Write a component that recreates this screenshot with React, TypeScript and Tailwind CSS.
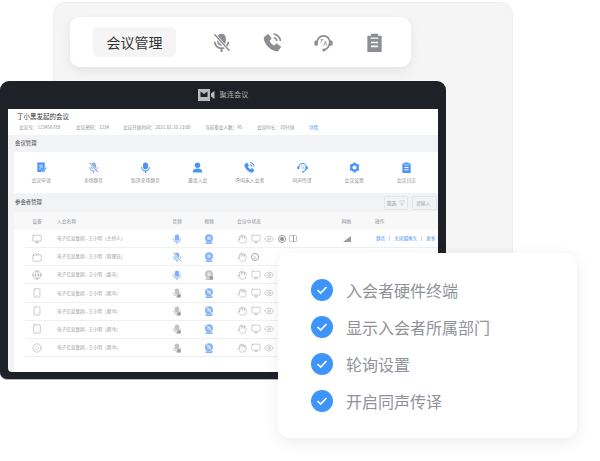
import React from "react";
import { Hand, Monitor, Eye, Tv, Smartphone, Tablet, Filter, Smile, Globe } from "lucide-react";

const FONT = { fontFamily: '"Noto Sans CJK SC", "Noto Sans", sans-serif' };

type IP = { c: string; s: number; off?: boolean; sub?: boolean; strike?: string };

function MicIcon({ c, s, off, sub, strike }: IP) {
  return (
    <svg width={s} height={s} viewBox="0 0 24 24" fill="none">
      <rect x="6.500" y="1" width="11" height="15" rx="5.500" fill={c} />
      <path d="M3.500 11a8.500 8.500 0 0 0 17 0" stroke={c} strokeWidth="2.200" />
      <path d="M12 19v5" stroke={c} strokeWidth="2.400" />
      {off && <path d="M3 2l18 20" stroke="#fff" strokeWidth="4" />}
      {off && <path d="M3 1.500l19 21" stroke={strike ?? c} strokeWidth="1.800" />}
      {sub && <circle cx="17" cy="19" r="4.500" fill="#989a9f" />}
    </svg>
  );
}

function CamIcon({ c, s, off, sub }: IP) {
  return (
    <svg width={s} height={s} viewBox="0 0 24 24" fill="none">
      <circle cx="12" cy="10" r="9.500" fill={c} />
      <circle cx="12" cy="10" r="4.500" fill="#fff" opacity="0.55" />
      <path d="M4 24h16v-4H4z" fill={c} />
      {off && <path d="M3 2l19 20" stroke="#fff" strokeWidth="3" />}
      {off && <path d="M3 3l18 19" stroke="#6a7fa3" strokeWidth="1.400" />}
      {sub && <circle cx="18" cy="19" r="4.500" fill="#989a9f" />}
    </svg>
  );
}

function PhoneIcon({ c, s }: IP) {
  return (
    <svg width={s} height={s} viewBox="0 0 24 24" fill="none">
      <path d="M1.500 5 6.500 1l4.500 6-2.600 2.800c1 2.700 3.200 5 5.900 6l2.700-2.700 6 4.400-3.500 4.800c-.6.800-1.500 1.100-2.500.9C9 21.500 2.500 15 1 7.500c-.2-1 0-1.900.5-2.500z" fill={c} />
      <path d="M13.500 1.500a9 9 0 0 1 8.500 8.500M13.500 6a4.500 4.500 0 0 1 4 4" stroke={c} strokeWidth="2.200" />
    </svg>
  );
}

function HeadsetIcon({ c, s }: IP) {
  return (
    <svg width={s} height={s} viewBox="0 0 24 24" fill="none">
      <path d="M4 11.500a8 8 0 0 1 16 0c0 5-3.500 9-7 9.500" stroke={c} strokeWidth="2.200" />
      <rect x="0.500" y="9.500" width="4.500" height="6.500" rx="1.800" fill={c} />
      <rect x="19" y="9.500" width="4.500" height="6.500" rx="1.800" fill={c} />
      <circle cx="12.500" cy="21.500" r="2" fill={c} />
      <path d="M8 8.500h4M10 8.500c0 1.800-.8 3-2 3.600M12.500 16l1.800-5.500 1.800 5.500" stroke={c} strokeWidth="1" />
    </svg>
  );
}

function ClipIcon({ c, s }: IP) {
  return (
    <svg width={s} height={s} viewBox="0 0 24 24" fill="none">
      <path d="M3 3.500h4.500V1h9v2.500H21V24H3z" fill={c} />
      <path d="M7 6.500h10" stroke="#fff" strokeWidth="1.500" />
      <path d="M7.500 12h9M7.500 17h9" stroke="#fff" strokeWidth="2.200" />
    </svg>
  );
}

function DocIcon({ c, s }: IP) {
  return (
    <svg width={s} height={s} viewBox="0 0 24 24" fill="none">
      <path d="M3 1h16v21H3z" fill={c} />
      <path d="M7 7h8M7 11h8M7 15h4" stroke="#fff" strokeWidth="1.700" />
      <path d="m13 19 8-8 2.500 2-8 8.500-3 .5z" fill={c} stroke="#fff" strokeWidth="1" />
    </svg>
  );
}

function UserIcon({ c, s }: IP) {
  return (
    <svg width={s} height={s} viewBox="0 0 24 24" fill={c}>
      <circle cx="12" cy="7" r="6" />
      <path d="M2 23v-3c0-4 4-6 10-6s10 2 10 6v3z" />
    </svg>
  );
}

function GearIcon({ c, s }: IP) {
  return (
    <svg width={s} height={s} viewBox="0 0 24 24" fill="none">
      <circle cx="12" cy="12" r="7" stroke={c} strokeWidth="5" />
      <path d="M12 1v5M12 18v5M2.500 6.500l4.300 2.500M17.200 15l4.300 2.500M2.500 17.500 6.800 15M17.200 9l4.300-2.500" stroke={c} strokeWidth="4.500" />
    </svg>
  );
}

function LogoMark() {
  return (
    <svg width="17" height="12" viewBox="0 0 17 12" fill="none">
      <path d="M0 0h12v12H0z" fill="#bcbcbc" />
      <path d="M2.500 2.500 6 5l3.500-2.500V8h-7z" fill="#1e2128" />
      <path d="M13 4.500 16.500 2v8L13 7.500z" fill="#bcbcbc" />
    </svg>
  );
}

function Check({ text }: { text: string }) {
  return (
    <div className="flex h-[37px] items-center gap-[13px]">
      <div className="flex h-[22px] w-[22px] items-center justify-center rounded-full bg-[#3d94fb]">
        <svg width="12" height="10" viewBox="0 0 12 10" fill="none">
          <path d="m1.500 5 3.200 3 5.800-6" stroke="#fff" strokeWidth="1.700" />
        </svg>
      </div>
      <span className="text-[16px] leading-none text-[#8f9298]">{text}</span>
    </div>
  );
}

const BLUE = "#4b94f7";
const LIGHT = "#82b2fa";
const SOFT = "#c0c2c5";

const actions: [React.ComponentType<IP>, string, boolean?][] = [
  [DocIcon, "会议申请"],
  [MicIcon, "全场静音", true],
  [MicIcon, "取消全场静音"],
  [UserIcon, "邀请入会"],
  [PhoneIcon, "呼叫未入会者"],
  [HeadsetIcon, "同声传译"],
  [GearIcon, "会议设置"],
  [ClipIcon, "会议日志"],
];

const iconProps = { size: 10, strokeWidth: 1, color: "#85878b" };

const rows = [
  { d: <Monitor {...iconProps} />, role: "主持人", a: 1, v: 1, s: 1 },
  { d: <Tv {...iconProps} />, role: "管理员", a: 2, v: 1, s: 2 },
  { d: <Globe {...iconProps} />, role: "嘉宾", a: 1, v: 3, s: 3 },
  { d: <Smartphone {...iconProps} />, role: "观众", a: 3, v: 2, s: 3 },
  { d: <Smartphone {...iconProps} />, role: "观众", a: 3, v: 2, s: 3 },
  { d: <Tablet {...iconProps} />, role: "观众", a: 3, v: 2, s: 3 },
  { d: <Smile {...iconProps} />, role: "观众", a: 3, v: 2, s: 3 },
];

const HEAD_COLS = "grid grid-cols-[46px_101px_32px_32px_105px_33px_1fr] items-center";
const ROW_COLS = "grid grid-cols-[24px_112px_32px_32px_105px_33px_1fr] items-center";

function Row({ r }: { r: (typeof rows)[number] }) {
  const hand = <Hand size={10} strokeWidth={1} color="#8f9195" />;
  const mon = <Monitor size={10} strokeWidth={1} color="#8f9195" />;
  const eye = <Eye size={10} strokeWidth={1} color="#8f9195" />;
  return (
    <div className={`${ROW_COLS} ml-[11px] h-[18.170px] border-b border-[#eff0f2] text-[#9a9ca0]`}>
      <div className="flex justify-center">{r.d}</div>
      <div className="pl-[8px] text-[4.600px] whitespace-nowrap">电子信息集团...王小明（{r.role}）</div>
      <div className="flex justify-center">
        {r.a === 1 && <MicIcon c={LIGHT} s={10} />}
        {r.a === 2 && <MicIcon c={LIGHT} s={10} off strike="#8a8d93" />}
        {r.a === 3 && <MicIcon c={SOFT} s={10} sub />}
      </div>
      <div className="flex justify-center">
        {r.v === 1 && <CamIcon c={LIGHT} s={10} />}
        {r.v === 2 && <CamIcon c={LIGHT} s={10} off />}
        {r.v === 3 && <CamIcon c={SOFT} s={10} sub />}
      </div>
      <div className="flex items-center gap-[3.500px] pl-[12px]">
        {hand}
        {r.s === 2 ? (
          <div className="flex h-[8px] w-[8px] items-center justify-center rounded-full border border-[#a5a7ab] text-[4px] leading-none">
            3
          </div>
        ) : (
          mon
        )}
        {r.s !== 2 && eye}
        {r.s === 1 && (
          <>
            <div className="flex h-[8px] w-[8px] items-center justify-center rounded-full border border-[#9a9ca0]">
              <div className="h-[4px] w-[4px] rounded-full bg-[#8f9195]" />
            </div>
            <div className="flex h-[7px] w-[8px] items-center justify-center rounded-[1px] border border-[#c5c7ca]">
              <div className="h-[7px] w-px bg-[#9a9ca0]" />
            </div>
          </>
        )}
      </div>
      <div className="flex justify-center">
        {r.s === 1 && (
          <svg width="8" height="6" viewBox="0 0 8 6">
            <path d="M0 6 8 0v6z" fill="#9a9ca0" />
          </svg>
        )}
      </div>
      <div className="flex items-center pl-[13px] text-[4.600px] whitespace-nowrap text-[#4b94f7]">
        {r.s === 1 && (
          <>
            <span>静音</span>
            <span className="mx-[4px] h-[5px] w-px bg-[#d5d7da]" />
            <span>关闭摄像头</span>
            <span className="mx-[4px] h-[5px] w-px bg-[#d5d7da]" />
            <span>更多</span>
          </>
        )}
      </div>
    </div>
  );
}

export default function App() {
  return (
    <div className="relative h-[461px] w-[600px] overflow-hidden bg-white" style={FONT}>
      {/* back panel */}
      <div className="absolute top-[2px] left-[53px] h-[340px] w-[460px] rounded-[12px] border border-[#f0f0f0] bg-[#f5f5f5]" />

      {/* toolbar */}
      <div className="absolute top-[17px] left-[70px] flex h-[50px] w-[341px] items-center rounded-[10px] bg-white pl-[23px] shadow-[0_4px_12px_rgba(0,0,0,0.07)]">
        <div className="flex h-[30px] w-[83px] items-center justify-center rounded-[5px] bg-[#f5f5f5] text-[14px] text-[#333]">
          会议管理
        </div>
        <div className="ml-[36px] flex gap-[32px]">
          <MicIcon c="#8c8e94" s={19} off />
          <PhoneIcon c="#8c8e94" s={19} />
          <HeadsetIcon c="#8c8e94" s={19} />
          <ClipIcon c="#8c8e94" s={19} />
        </div>
      </div>

      {/* dark window */}
      <div className="absolute top-[81px] left-0 flex h-[298px] w-[446px] flex-col rounded-t-[9px] rounded-b-[7px] bg-[#1e2128] px-[8px] pb-[7px] shadow-[0_1px_0_#b5b7bc]">
        <div className="flex h-[28px] shrink-0 items-center justify-center gap-[5px]">
          <LogoMark />
          <span className="text-[7.200px] leading-none text-[#b0b0b0]">聚连会议</span>
        </div>
        <div className="flex min-h-0 flex-1 flex-col rounded-b-[4px] bg-[#f2f3f5]">
          {/* meeting info */}
          <div className="h-[26px] shrink-0 bg-white pt-[3px] pl-[9px]">
            <div className="text-[6.500px] leading-[9px] text-[#333]">丁小黑发起的会议</div>
            <div className="mt-[3px] flex pl-[2px] text-[4.600px] leading-[6px] whitespace-nowrap text-[#8f9195]">
              <span className="w-[57px]">会议号：123456789</span>
              <span className="w-[47px]">会议密码：1234</span>
              <span className="w-[82px]">会议开始时间：2021.01.10 13:00</span>
              <span className="w-[52px]">当前参会人数：45</span>
              <span className="w-[52px]">会议时长：10分钟</span>
              <span className="text-[#4b94f7]">详情</span>
            </div>
          </div>
          {/* section */}
          <div className="flex h-[17px] shrink-0 items-center pl-[7px] text-[5.400px] text-[#444]">会议管理</div>
          <div className="ml-[6px] grid h-[41px] shrink-0 grid-cols-[repeat(8,52.200px)] items-center bg-white pl-px">
            {actions.map(([I, label, off]) => (
              <div key={label} className="flex flex-col items-center gap-[4px]">
                <I c={off ? LIGHT : BLUE} s={11} off={off} strike="#6f7f99" />
                <span className="text-[4.800px] leading-[6px] whitespace-nowrap text-[#8f9195]">{label}</span>
              </div>
            ))}
          </div>
          {/* participants */}
          <div className="flex h-[19px] shrink-0 items-center justify-between pr-px pl-[7px]">
            <span className="text-[5.400px] text-[#444]">参会者管理</span>
            <div className="flex gap-[4px] text-[4.800px] text-[#8f9195]">
              <div className="flex h-[14px] w-[24px] items-center justify-center gap-[3px] rounded-[1px] border border-[#e4e5e8]">
                筛选
                <Filter size={6} strokeWidth={1} />
              </div>
              <div className="flex h-[14px] w-[25px] items-center rounded-[1px] border border-[#e4e5e8] pl-[3px] text-[#a5a7ab]">
                请输入
              </div>
            </div>
          </div>
          <div className="ml-[6px] flex-1 rounded-bl-[3px] bg-white">
            <div className={`${HEAD_COLS} h-[18px] bg-[#f8f8f9] text-[4.800px] text-[#8f9195]`}>
              <div className="text-center">设备</div>
              <div className="-ml-[3px]">入会名称</div>
              <div className="text-center">音频</div>
              <div className="text-center">视频</div>
              <div className="pl-[12px]">会议中状态</div>
              <div className="text-center">网络</div>
              <div className="pl-[12px]">操作</div>
            </div>
            {rows.map((r, i) => (
              <Row key={i} r={r} />
            ))}
          </div>
        </div>
      </div>

      {/* feature card */}
      <div className="absolute top-[253px] left-[278px] flex h-[185px] w-[299px] flex-col justify-center rounded-[12px] bg-white pl-[33px] shadow-[0_4px_16px_rgba(0,0,0,0.08)]">
        <Check text="入会者硬件终端" />
        <Check text="显示入会者所属部门" />
        <Check text="轮询设置" />
        <Check text="开启同声传译" />
      </div>
    </div>
  );
}
